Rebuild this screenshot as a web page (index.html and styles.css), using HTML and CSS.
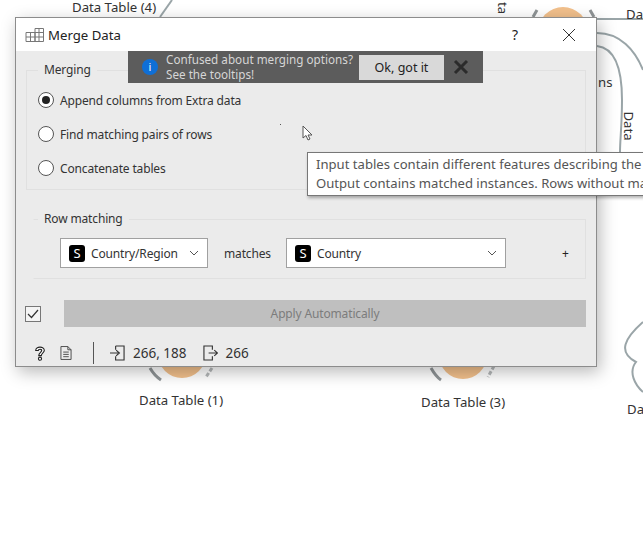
FILE: index.html
```html
<!DOCTYPE HTML>
<html>
<head>
    <title>Merge Data</title>
    <meta name="viewport" content="width=device-width, initial-scale=1">
    <link rel="stylesheet" href="styles.css">
</head>
<body>
    <!-- workflow canvas behind the dialog -->
    <svg class="links" width="643" height="536" viewBox="0 0 643 536">
        <path class="link" d="M160 17 L172 0"/>
        <path class="link" d="M597 19 H643"/>
        <path class="link" d="M597 33 C620 33 635 50 643 70"/>
        <path class="link" d="M597 46 C615 48 622 70 622 100 C622 125 620 140 620 152"/>
        <path class="link" d="M643 322 C625 338 617 352 636 362 C628 372 635 385 643 392"/>
        <circle class="node" cx="563" cy="32" r="25"/>
        <circle class="node" cx="182" cy="354" r="24"/>
        <circle class="node" cx="463" cy="355" r="24"/>
        <path class="ring" d="M533 17 L537 10 M590 10 L594 17"/>
        <path class="ring" d="M150 368 C154 375 158 378 161 380"/>
        <path class="ring dashed" d="M212 368 L206 377"/>
        <path class="ring" d="M431 368 C435 375 438 378 441 380"/>
        <path class="ring dashed" d="M494 366 L488 377"/>
    </svg>
    <span class="label label-t4">Data Table (4)</span>
    <span class="label label-t1">Data Table (1)</span>
    <span class="label label-t3">Data Table (3)</span>
    <span class="label label-da1">Da</span>
    <span class="label label-da2">Da</span>
    <span class="label label-ns">ns</span>
    <span class="label label-ta">ta</span>
    <span class="label label-data">Data</span>

    <div class="window">
        <div class="titlebar">
            <svg class="title-icon" width="20" height="16" viewBox="0 0 20 16">
                <path d="M1 5.500H10V14.500H1ZM1 10H10M5.500 5.500V14.500"/>
                <path d="M10 1.500H18.500V14.500H10ZM10 5.500H18.500M10 10H18.500M14 1.500V14.500"/>
            </svg>
            <span class="title-text">Merge Data</span>
            <span class="title-help">?</span>
            <svg class="title-close" width="14" height="14" viewBox="0 0 14 14">
                <path d="M1 1L13 13M13 1L1 13"/>
            </svg>
        </div>

        <div class="content">
            <fieldset class="group group-merging">
                <legend>Merging</legend>
                <div class="radio-row"><span class="radio checked"></span>Append columns from Extra data</div>
                <div class="radio-row"><span class="radio"></span>Find matching pairs of rows</div>
                <div class="radio-row"><span class="radio"></span>Concatenate tables</div>
            </fieldset>

            <fieldset class="group group-matching">
                <legend>Row matching</legend>
                <div class="match-row">
                    <div class="combo combo-left">
                        <span class="badge">S</span>
                        <span class="combo-text">Country/Region</span>
                        <svg class="chevron" width="10" height="6" viewBox="0 0 10 6"><path d="M1 1L5 5L9 1"/></svg>
                    </div>
                    <span class="matches">matches</span>
                    <div class="combo combo-right">
                        <span class="badge">S</span>
                        <span class="combo-text">Country</span>
                        <svg class="chevron" width="10" height="6" viewBox="0 0 10 6"><path d="M1 1L5 5L9 1"/></svg>
                    </div>
                    <span class="plus">+</span>
                </div>
            </fieldset>

            <div class="apply-row">
                <span class="checkbox">
                    <svg width="12" height="10" viewBox="0 0 12 10"><path d="M1 5L4.500 8.500L11 1"/></svg>
                </span>
                <div class="apply-btn">Apply Automatically</div>
            </div>

            <div class="status">
                <svg class="st-help" width="12" height="17" viewBox="0 0 14 18">
                    <path d="M2 5.500C2 3 4.500 1.500 7 1.500C9.500 1.500 12 3 12 5.500C12 8 8.500 8.500 8.500 11.500H5.500C5.500 8 9 7.500 9 5.500C9 4.500 8 4 7 4C6 4 5 4.500 5 5.500Z"/>
                    <circle cx="7" cy="15" r="1.800"/>
                </svg>
                <svg class="st-doc" width="12" height="14" viewBox="0 0 13 15">
                    <path d="M1 .5H8.500L12 4V14.500H1ZM8.500 .5V4H12M3.500 6.500H9.500M3.500 9H9.500M3.500 11.500H9.500"/>
                </svg>
                <span class="st-sep"></span>
                <svg class="st-io" width="15" height="16" viewBox="0 0 16 17">
                    <path d="M6 1H15V16H6V12M6 5V1M0 8.500H9M6.500 5.500L10 8.500L6.500 11.500"/>
                </svg>
                <span class="st-text st-in">266, 188</span>
                <svg class="st-io" width="15" height="16" viewBox="0 0 16 17">
                    <path d="M10 5V1H1V16H10V12M6 8.500H15M12 5.500L15.500 8.500L12 11.500"/>
                </svg>
                <span class="st-text st-out">266</span>
            </div>
        </div>

        <!-- overlays on the dialog -->
        <div class="notice">
            <span class="notice-icon">i</span>
            <div class="notice-text">Confused about merging options?<br>See the tooltips!</div>
            <div class="notice-btn">Ok, got it</div>
            <svg class="notice-close" width="16" height="16" viewBox="0 0 16 16"><path d="M2 2L14 14M14 2L2 14"/></svg>
        </div>
        <div class="tooltip">Input tables contain different features describing the same data instances.<br>Output contains matched instances. Rows without matches are removed.</div>
        <svg class="pointer" width="12" height="16" viewBox="0 0 12 16">
            <path d="M1 1V13L4 10.500L6 15L8 14L6 10H10Z"/>
        </svg>
        <span class="speck"></span>
    </div>
</body>
</html>
```

FILE: styles.css
```css
html {overflow: hidden;}
body {margin: 0; width: 643px; height: 536px; position: relative; overflow: hidden; background: #fff; font-family: "Noto Sans", sans-serif; font-size: 12px; letter-spacing: -.15px; color: #333;}

/* canvas */
.links {position: absolute; left: 0; top: 0;}
.link {fill: none; stroke: #9aa5a8; stroke-width: 2;}
.node {fill: #f2c08c;}
.ring {fill: none; stroke: #8f9496; stroke-width: 3;}
.ring.dashed {stroke: #b5b8b9; stroke-dasharray: 4 2;}
.label {position: absolute; white-space: nowrap; color: #333; font-size: 13.200px; letter-spacing: 0;}
.label-t4 {left: 72px; top: -2px;}
.label-t1 {left: 139px; top: 391px;}
.label-t3 {left: 421px; top: 393px;}
.label-da1 {left: 626px; top: 5px;}
.label-da2 {left: 627px; top: 400px;}
.label-ns {left: 598px; top: 73px;}
.label-ta {left: 497px; top: -1px; transform: rotate(90deg);}
.label-data {left: 614px; top: 117px; transform: rotate(90deg);}

/* dialog */
.window {position: absolute; left: 15px; top: 17px; width: 580px; height: 348px; background: #ebebeb; border: 1px solid #8c8c8c; box-shadow: 3px 5px 16px rgba(0, 0, 0, .28);}
.titlebar {height: 33px; background: #fff; display: flex; align-items: center; padding: 0 20px 0 9px; color: #222;}
.title-icon {fill: none; stroke: #777; stroke-width: 1; margin-right: 3px;}
.title-text {flex: 1; font-size: 13.200px; letter-spacing: 0;}
.title-help {font-size: 14px; margin-right: 44px;}
.title-close {fill: none; stroke: #333; stroke-width: 1;}
.content {padding: 0 10px;}

.group {margin: 10px 0 0; min-width: 0; border: 1px solid #e0e0e0; padding: 0;}
.group legend {padding: 0 6px; line-height: 18px; color: #333;}
.group-merging {padding: 4px 11px 4px;}
.group-matching {margin: 20px 0 0 7px; padding: 10px 0 10px; border-left-color: #ebebeb;}
.group-matching legend {margin-left: 4px;}

.radio-row {height: 34px; display: flex; align-items: center;}
.radio {width: 14px; height: 14px; border: 1px solid #555; border-radius: 50%; background: #fff; margin-right: 6px; display: flex; align-items: center; justify-content: center;}
.radio.checked::after {content: ""; width: 8px; height: 8px; border-radius: 50%; background: #222;}

.match-row {display: flex; align-items: center; height: 30px; padding-left: 26px;}
.combo {box-sizing: border-box; height: 30px; border: 1px solid #a0a0a0; background: #fff; display: flex; align-items: center; padding: 0 8px;}
.combo-left {width: 148px;}
.combo-right {width: 220px;}
.badge {width: 16px; height: 17px; border-radius: 3px; background: #000; color: #fff; font-size: 13px; display: flex; align-items: center; justify-content: center; margin-right: 6px;}
.combo-text {flex: 1;}
.chevron {fill: none; stroke: #555; stroke-width: 1;}
.matches {width: 46px; margin: 0 16px; white-space: nowrap;}
.plus {margin-left: 56px; color: #222;}

.apply-row {display: flex; align-items: center; margin-top: 21px; height: 27px;}
.checkbox {width: 14px; height: 14px; border: 1px solid #777; background: #f4f4f4; margin-left: -1px; display: flex; align-items: center; justify-content: center;}
.checkbox svg {fill: none; stroke: #333; stroke-width: 1.200;}
.apply-btn {flex: 1; margin-left: 23px; height: 27px; line-height: 27px; background: #bfbfbf; color: #7c7c7c; text-align: center;}

.status {display: flex; align-items: center; margin-top: 15px; height: 22px; padding-left: 8px; font-size: 13.500px; letter-spacing: 0;}
.status svg {flex: none;}
.st-help {fill: #fff; stroke: #222; stroke-width: 1.300;}
.st-doc {fill: none; stroke: #444; stroke-width: 1; margin-left: 14px;}
.st-sep {width: 1px; height: 22px; background: #555; margin: 0 16px 0 21px;}
.st-io {fill: none; stroke: #333; stroke-width: 1.200;}
.st-text {margin-left: 8px;}
.st-in {margin-right: 17px;}
.st-out {margin-left: 7px;}

/* overlays */
.notice {position: absolute; left: 112px; top: 33px; width: 355px; height: 32px; background: #5c5c5c; color: #d6d6d6; display: flex; align-items: center; letter-spacing: 0; font-size: 11.700px;}
.notice-icon {width: 16px; height: 16px; border-radius: 50%; background: #0f6fd6; color: #fff; font-size: 11px; text-align: center; line-height: 16px; margin: 0 8px 0 14px; flex: none;}
.notice-text {line-height: 15px; width: 193px; white-space: nowrap;}
.notice-btn {width: 85px; height: 25px; line-height: 25px; background: #d9d9d9; color: #222; text-align: center; flex: none; font-size: 12.500px;}
.notice-close {fill: none; stroke: #2b2b2b; stroke-width: 3; margin-left: 9px; flex: none;}

.tooltip {position: absolute; left: 291px; top: 134px; height: 40px; padding: 2px 0 0 8px; box-sizing: content-box; background: #fff; border: 1px solid #777; box-shadow: 1px 2px 3px rgba(0, 0, 0, .3); color: #555; white-space: nowrap; font-size: 13.100px; letter-spacing: 0; line-height: 19px; width: 400px;}
.pointer {position: absolute; left: 286px; top: 107px; fill: #fff; stroke: #555; stroke-width: 1;}
.speck {position: absolute; left: 264px; top: 106px; width: 1px; height: 1px; background: #555;}
```
